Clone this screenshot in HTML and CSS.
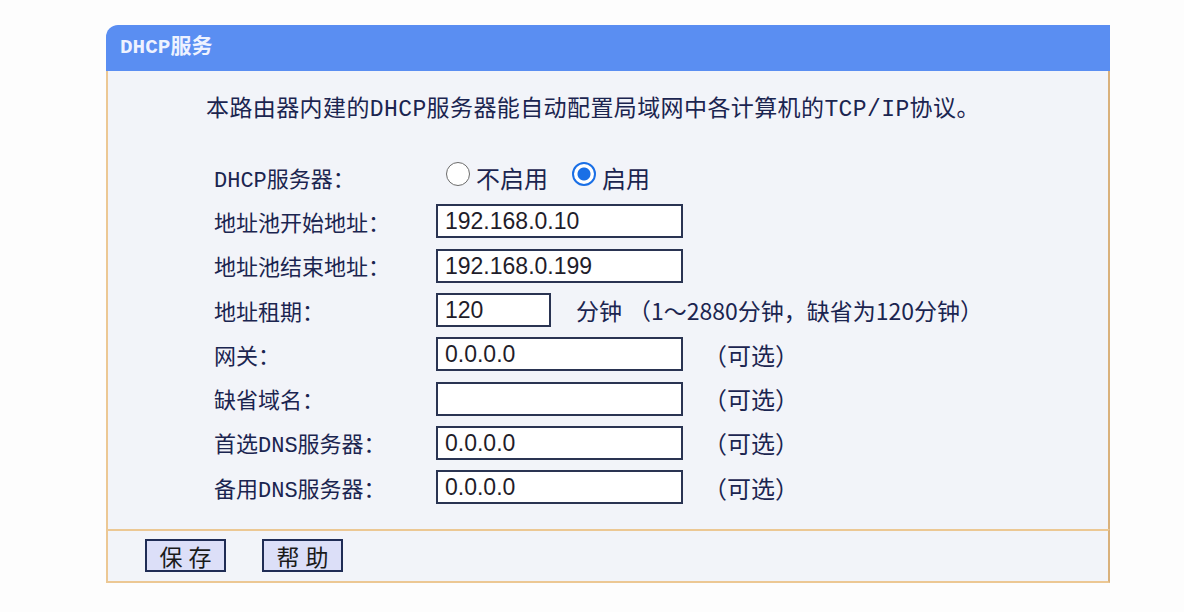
FILE: index.html
```html
<!DOCTYPE html>
<html lang="zh-CN">

<head>
  <meta charset="UTF-8" />
  <title>DHCP服务</title>
  <link rel="stylesheet" href="styles.css">
</head>

<body>
  <div class="page">
    <div class="panel">
      <div class="panel-head">DHCP服务</div>

      <div class="panel-body">
        <p class="intro">本路由器内建的DHCP服务器能自动配置局域网中各计算机的TCP/IP协议。</p>

        <div class="form">
          <div class="row">
            <span class="label">DHCP服务器：</span>
            <div class="field">
              <span class="radio"></span><span class="radio-text">不启用</span>
              <span class="radio checked"></span><span class="radio-text">启用</span>
            </div>
          </div>
          <div class="row">
            <span class="label">地址池开始地址：</span>
            <div class="field"><span class="input">192.168.0.10</span></div>
          </div>
          <div class="row">
            <span class="label">地址池结束地址：</span>
            <div class="field"><span class="input">192.168.0.199</span></div>
          </div>
          <div class="row">
            <span class="label">地址租期：</span>
            <div class="field">
              <span class="input short">120</span>
              <span class="unit">分钟</span>
              <span class="hint range">（1～2880分钟，缺省为120分钟）</span>
            </div>
          </div>
          <div class="row">
            <span class="label">网关：</span>
            <div class="field"><span class="input">0.0.0.0</span><span class="hint">（可选）</span></div>
          </div>
          <div class="row">
            <span class="label">缺省域名：</span>
            <div class="field"><span class="input"></span><span class="hint">（可选）</span></div>
          </div>
          <div class="row">
            <span class="label">首选DNS服务器：</span>
            <div class="field"><span class="input">0.0.0.0</span><span class="hint">（可选）</span></div>
          </div>
          <div class="row">
            <span class="label">备用DNS服务器：</span>
            <div class="field"><span class="input">0.0.0.0</span><span class="hint">（可选）</span></div>
          </div>
        </div>
      </div>

      <div class="panel-foot">
        <button class="btn">保存</button>
        <button class="btn">帮助</button>
      </div>
    </div>
  </div>
</body>

</html>
```

FILE: styles.css
```css
* {
  box-sizing: border-box;
  margin: 0;
  padding: 0;
}

body {
  background: #fdfdfd;
  font-family: "Liberation Mono", "Noto Sans CJK SC", monospace;
  color: #1b2550;
}

.page {
  padding: 25px 0 0 106px;
}

.panel {
  width: 1004px;
}

.panel-head {
  height: 46px;
  background: #5a8ef2;
  border-top-left-radius: 12px;
  color: #eef2ff;
  font-size: 21px;
  font-weight: bold;
  line-height: 46px;
  padding-left: 14px;
}

.panel-body {
  background: #f2f4f9;
  border-left: 2px solid #ecc894;
  border-right: 2px solid #d9b17c;
  padding: 24px 0 20px 98px;
}

.intro {
  font-size: 23px;
  line-height: 30px;
  letter-spacing: 0.4px;
}

.form {
  margin-top: 30px;
  padding-left: 8px;
}

.row {
  display: flex;
  align-items: center;
  height: 44.3px;
}

.label {
  width: 222px;
  font-size: 22px;
}

.field {
  display: flex;
  align-items: center;
}

.input {
  width: 247px;
  height: 34px;
  background: #fff;
  border: 2px solid #2a3452;
  font-family: "Liberation Sans", sans-serif;
  font-size: 23px;
  line-height: 30px;
  color: #1f1d2a;
  padding-left: 7px;
}

.input.short {
  width: 115px;
}

.unit {
  font-family: "Noto Sans CJK SC", sans-serif;
  font-size: 23px;
  margin-left: 25px;
}

.hint {
  font-family: "Noto Sans CJK SC", sans-serif;
  font-size: 24px;
  margin-left: 20px;
}

.hint.range {
  font-size: 23px;
  margin-left: 6px;
}

.radio {
  width: 24px;
  height: 24px;
  border: 1.5px solid #6b6b6b;
  border-radius: 50%;
  background: #fff;
  margin-left: 10px;
  margin-right: 6px;
  position: relative;
  top: -3px;
}

.radio.checked {
  border: 2px solid #1a6fe6;
  background: radial-gradient(circle, #1a6fe6 0 6px, #fff 7px);
  margin-left: 24px;
}

.radio-text {
  font-family: "Noto Sans CJK SC", sans-serif;
  font-size: 24px;
}

.panel-foot {
  display: flex;
  gap: 36px;
  height: 54px;
  background: #f2f4f9;
  border: 2px solid #ecc894;
  border-right-color: #d9b17c;
  padding: 8px 0 0 37px;
}

.btn {
  width: 81px;
  height: 33px;
  background: #dcdff8;
  border: 2px solid #1f2c55;
  font-family: "Noto Sans CJK SC", sans-serif;
  font-size: 23px;
  letter-spacing: 6px;
  text-indent: 6px;
  color: #1a1a1a;
  line-height: 28px;
}
```
